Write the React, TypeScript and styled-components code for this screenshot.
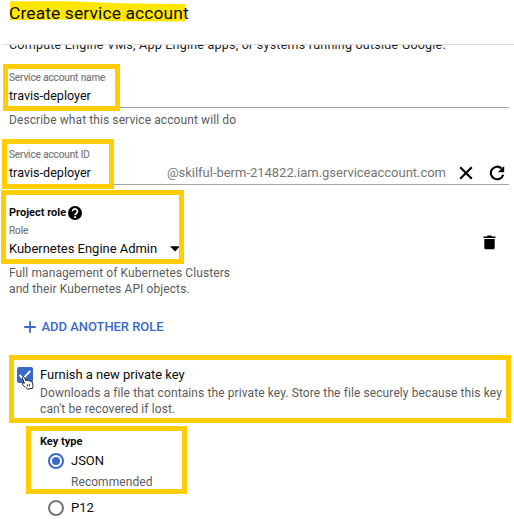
import React from 'react';
import styled, { createGlobalStyle } from 'styled-components';

const GlobalStyle = createGlobalStyle`
  * { box-sizing: border-box; }
  body { margin: 0; background: #fff; overflow: hidden; }
`;

const Page = styled.main`
  display: flex;
  flex-direction: column;
  width: 514px;
  height: 523px;
  overflow: hidden;
  background: #fff;
  color: #0c0c0c;
  font-family: Roboto, 'Liberation Sans', sans-serif;
  white-space: nowrap;
`;

const Header = styled.header`
  position: relative;
  flex: none;
  height: 45px;
  margin-left: 3px;
  padding: 1px 0 0 6px;
  border-bottom: 1px solid #dedede;
`;

const Title = styled.h1`
  position: relative;
  margin: 0;
  font-size: 17.4px;
  font-weight: 400;
  line-height: 24px;
  letter-spacing: 0.13px;
`;

const Marker = styled.svg`
  position: absolute;
  left: 6px;
  top: 0;
`;

const Intro = styled.div`
  flex: none;
  height: 17px;
  padding-left: 9px;
  overflow: hidden;
`;

const IntroText = styled.p`
  margin: -8px 0 0;
  font-size: 12.5px;
  line-height: 16px;
  letter-spacing: 0.225px;
  color: #222;
`;

const Section = styled.section<{ $height: number; $top: number; $left?: number }>`
  position: relative;
  flex: none;
  height: ${(p) => p.$height}px;
  padding: ${(p) => p.$top}px 5px 0 ${(p) => p.$left ?? 9}px;
`;

const Highlight = styled.div<{ $x: number; $y: number; $w: number; $h: number }>`
  position: absolute;
  left: ${(p) => p.$x}px;
  top: ${(p) => p.$y}px;
  width: ${(p) => p.$w}px;
  height: ${(p) => p.$h}px;
  border: 5px solid #ffcd00;
  pointer-events: none;
`;

const Label = styled.div`
  font-size: 10px;
  line-height: 12px;
  letter-spacing: -0.11px;
  color: #757575;
  -webkit-text-stroke: 0.15px #757575;
`;

const InputRow = styled.div`
  display: flex;
  align-items: center;
  height: 22px;
  margin-top: 2px;
  padding-bottom: 1px;
  border-bottom: 1px solid #a4a4a4;
`;

const Value = styled.span`
  font-size: 12.6px;
  line-height: 20px;
`;

const Domain = styled.span`
  margin-left: auto;
  font-size: 13px;
  line-height: 20px;
  letter-spacing: -0.02px;
  color: #757575;
`;

const ClearIcon = styled.svg`
  margin-left: 13px;
`;

const RefreshIcon = styled.svg`
  margin: 0 4px 0 16px;
`;

const Helper = styled.p<{ $gap?: number; $leading?: number }>`
  margin: ${(p) => p.$gap ?? 0}px 0 0;
  font-size: 12px;
  line-height: ${(p) => p.$leading ?? 16}px;
  letter-spacing: 0.1px;
  color: #5c5c5c;
`;

const Heading = styled.h2`
  display: flex;
  align-items: center;
  gap: 2px;
  height: 14px;
  margin: 0;
  font-size: 11px;
  font-weight: 700;
  line-height: 14px;
`;

const RoleRow = styled.div`
  display: flex;
  align-items: flex-start;
  justify-content: space-between;
  height: 36px;
  margin-top: 5px;
  padding-right: 13px;
`;

const RoleSelect = styled.div`
  display: flex;
  flex-direction: column;
  gap: 2px;
`;

const SelectLine = styled.div`
  display: flex;
  align-items: center;
  gap: 13px;
`;

const OptionText = styled.span`
  font-size: 13px;
  line-height: 20px;
  letter-spacing: -0.03px;
`;

const TrashIcon = styled.svg`
  margin-top: 10px;
`;

const AddButton = styled.button`
  display: flex;
  align-items: center;
  gap: 6px;
  height: 20px;
  padding: 0;
  border: 0;
  background: none;
  color: #3b69c8;
  font: 500 13px/20px Roboto, 'Liberation Sans', sans-serif;
  letter-spacing: -0.045px;
`;

const CheckRow = styled.div`
  display: flex;
  align-items: flex-start;
  gap: 7px;
`;

const Checkbox = styled.span`
  position: relative;
  flex: none;
  display: flex;
  width: 16px;
  height: 16px;
  margin-top: 2px;
  border-radius: 2px;
  background: #3b69c8;
`;

const HandCursor = styled.svg`
  position: absolute;
  left: 4px;
  top: 8px;
`;

const Stack = styled.div`
  display: flex;
  flex-direction: column;
`;

const RadioRow = styled.label<{ $gap: number }>`
  display: flex;
  align-items: center;
  gap: 7px;
  height: 20px;
  margin: ${(p) => p.$gap}px 0 0 8px;
`;

const Radio = styled.span<{ $checked?: boolean }>`
  display: flex;
  align-items: center;
  justify-content: center;
  width: 16px;
  height: 16px;
  border: 2px solid ${(p) => (p.$checked ? '#3b69c8' : '#757575')};
  border-radius: 50%;

  &::after {
    content: '';
    width: 8px;
    height: 8px;
    border-radius: 50%;
    background: ${(p) => (p.$checked ? '#3b69c8' : 'transparent')};
  }
`;

const RadioNote = styled(Helper)`
  margin-left: 31px;
  letter-spacing: 0.06px;
`;

export default function App() {
  return (
    <>
      <GlobalStyle />
      <Page>
        <Header>
          <Marker width="178" height="23" viewBox="0 0 178 23">
            <path d="M1 1.300H60L110 3.200 176 4V21.600L115 21.200 60 19.600 1 20.300Z" fill="#ffe600" />
          </Marker>
          <Title>Create service account</Title>
        </Header>

        <Intro>
          <IntroText>Compute Engine VMs, App Engine apps, or systems running outside Google.</IntroText>
        </Intro>

        <Section $height={77} $top={10}>
          <Label>Service account name</Label>
          <InputRow>
            <Value>travis-deployer</Value>
          </InputRow>
          <Helper $gap={4}>Describe what this service account will do</Helper>
          <Highlight $x={3} $y={2} $w={117} $h={47} />
        </Section>

        <Section $height={51} $top={10}>
          <Label>Service account ID</Label>
          <InputRow>
            <Value>travis-deployer</Value>
            <Domain>@skilful-berm-214822.iam.gserviceaccount.com</Domain>
            <ClearIcon width="14" height="14" viewBox="0 0 14 14">
              <path d="m1.200 1.200 11.600 11.600M12.800 1.200 1.200 12.800" stroke="#000" strokeWidth="2.200" />
            </ClearIcon>
            <RefreshIcon width="16" height="16" viewBox="0 0 16 16">
              <path d="M12.600 3.500A6.300 6.300 0 1 0 14.200 9.700" fill="none" stroke="#000" strokeWidth="2.100" />
              <path d="M15.200 .900v6.300H8.900Z" fill="#000" />
            </RefreshIcon>
          </InputRow>
          <Highlight $x={2} $y={0} $w={112} $h={50} />
        </Section>

        <Section $height={124} $top={16}>
          <Heading>
            Project role
            <svg width="14" height="14" viewBox="0 0 14 14">
              <circle cx="7" cy="7" r="7" fill="#000" />
              <path d="M4.600 5.400A2.400 2.400 0 1 1 8.500 7.200C7.500 7.900 7.100 8.200 7.100 9.200" fill="none" stroke="#fff" strokeWidth="1.700" />
              <rect x="6.200" y="10.200" width="1.800" height="1.700" fill="#fff" />
            </svg>
          </Heading>
          <RoleRow>
            <RoleSelect>
              <Label>Role</Label>
              <SelectLine>
                <OptionText>Kubernetes Engine Admin</OptionText>
                <svg width="10" height="6" viewBox="0 0 10 6">
                  <path d="M0 .3h10L5 5.600Z" fill="#000" />
                </svg>
              </SelectLine>
            </RoleSelect>
            <TrashIcon width="13" height="15" viewBox="0 0 13 15">
              <path d="M.5 1.500h3.300L4.700.5h3.600l.9 1h3.300V3H.5ZM1.300 4h10.400v8.700q0 1.600-1.600 1.600H2.900q-1.600 0-1.600-1.600Z" fill="#000" />
            </TrashIcon>
          </RoleRow>
          <Helper $gap={4}>
            Full management of Kubernetes Clusters
            <br />
            and their Kubernetes API objects.
          </Helper>
          <Highlight $x={1} $y={0} $w={183} $h={74} />
        </Section>

        <Section $height={41} $top={3} $left={23.5}>
          <AddButton>
            <svg width="12" height="12" viewBox="0 0 12 12">
              <path d="M6 .2v11.600M.2 6h11.600" stroke="currentColor" strokeWidth="1.800" />
            </svg>
            ADD ANOTHER ROLE
          </AddButton>
        </Section>

        <Section $height={71} $top={10} $left={17}>
          <CheckRow>
            <Checkbox>
              <svg width="16" height="16" viewBox="0 0 16 16">
                <path d="m2.500 8 3.600 3.700 7.200-7.800" fill="none" stroke="#fff" strokeWidth="1.800" />
              </svg>
              <HandCursor width="14" height="16" viewBox="0 0 14 16">
                <path
                  d="M3.400 8.300 1.600 3.600C1 2 2.800 1.300 3.500 2.700L5 5.900c.2-1 1.700-.9 2 .1.400-.8 1.800-.6 2.100.4.800-.6 1.800-.1 2 .8l.8 2.900c.2 1-.2 2-.2 3.200l-5.200.9C5.500 12.600 3.600 11.600 2 10.200.5 8.700 1.500 7.300 3.400 8.300Z"
                  fill="#fff"
                  stroke="#222"
                  strokeWidth="1"
                />
                <path d="m6.400 9.200.4 2.400M8.200 8.900l.4 2.400" stroke="#222" strokeWidth=".9" />
              </HandCursor>
            </Checkbox>
            <Stack>
              <OptionText>Furnish a new private key</OptionText>
              <Helper $gap={1} $leading={15.5}>
                Downloads a file that contains the private key. Store the file securely because this key
                <br />
                can't be recovered if lost.
              </Helper>
            </Stack>
          </CheckRow>
          <Highlight $x={9} $y={0} $w={502} $h={68} />
        </Section>

        <Section $height={97} $top={9} $left={40}>
          <Heading>Key type</Heading>
          <RadioRow $gap={2}>
            <Radio $checked />
            <OptionText>JSON</OptionText>
          </RadioRow>
          <RadioNote $gap={3}>Recommended</RadioNote>
          <RadioRow $gap={8}>
            <Radio />
            <OptionText>P12</OptionText>
          </RadioRow>
          <Highlight $x={26} $y={0} $w={161} $h={68} />
        </Section>
      </Page>
    </>
  );
}
